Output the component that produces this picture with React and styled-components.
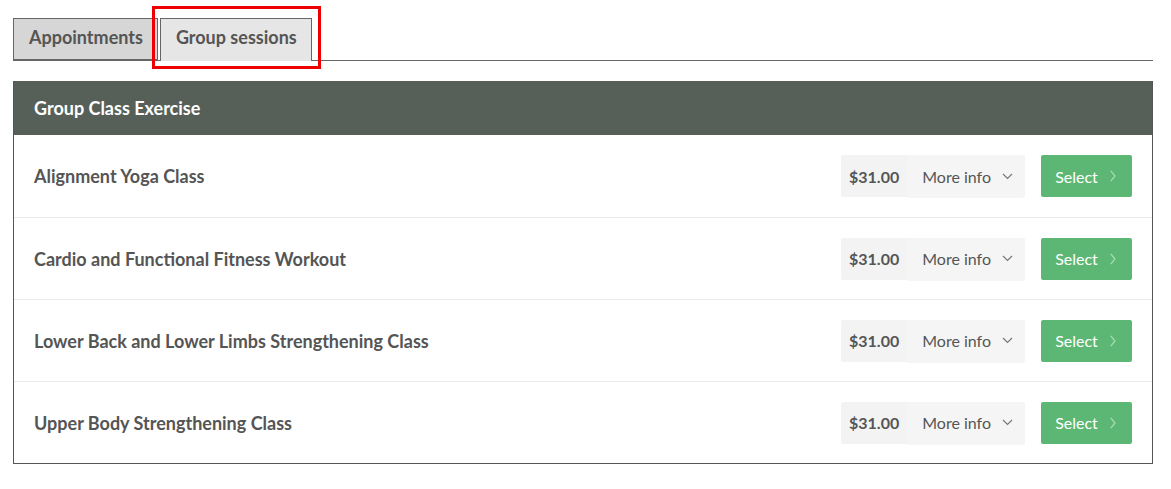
import React from "react";
import styled, { createGlobalStyle } from "styled-components";

const GlobalStyle = createGlobalStyle`
  body {
    margin: 0;
    background: #fff;
    font-family: Lato, "Liberation Sans", sans-serif;
  }
`;

const Page = styled.div`
  padding: 18px 18px 0 13px;
  width: 1140px;
`;

const TabBar = styled.div`
  display: flex;
  align-items: flex-start;
  gap: 2px;
  border-bottom: 1px solid #666;
  height: 42px;
`;

const Tab = styled.div`
  position: relative;
  box-sizing: border-box;
  height: ${({ active }) => (active ? "43px" : "42px")};
  padding: 6px 14px 0 15px;
  font-size: 18px;
  line-height: 24px;
  font-weight: 700;
  color: #555;
  background: ${({ active }) => (active ? "#e6e6e6" : "#d6d6d6")};
  border: 1px solid #666;
  border-bottom: ${({ active }) => (active ? "none" : "1px solid #666")};

  ${({ highlighted }) =>
    highlighted &&
    `
    &::after {
      content: "";
      position: absolute;
      top: -13px;
      left: -9px;
      right: -10px;
      bottom: -8px;
      border: 3px solid #ee0000;
      pointer-events: none;
    }
  `}
`;

const Panel = styled.section`
  margin-top: 20px;
  border: 1px solid #555;
  border-top: none;
`;

const PanelHeader = styled.h2`
  margin: 0;
  height: 54px;
  display: flex;
  align-items: center;
  padding: 0 20px;
  background: #566059;
  color: #fff;
  font-size: 18px;
  font-weight: 700;
`;

const Row = styled.div`
  height: 82px;
  box-sizing: border-box;
  display: flex;
  align-items: center;
  padding: 0 20px;
  border-top: ${({ first }) => (first ? "none" : "1px solid #ebebeb")};
`;

const Title = styled.div`
  flex: 1;
  font-size: 18px;
  font-weight: 700;
  color: #555;
`;

const PriceBox = styled.div`
  display: flex;
  align-items: center;
  height: 42px;
  background: #f3f3f3;
  border-radius: 2px;
`;

const Price = styled.span`
  padding: 0 8px;
  font-size: 16px;
  font-weight: 700;
  color: #555;
`;

const MoreInfo = styled.button`
  display: flex;
  align-items: center;
  gap: 11px;
  height: 43px;
  align-self: flex-start;
  padding: 0 12px 1px 15px;
  border: none;
  border-radius: 2px;
  background: #f5f5f5;
  font-family: inherit;
  font-size: 16px;
  color: #555;
`;

const SelectButton = styled.button`
  margin-left: 16px;
  width: 91px;
  height: 42px;
  display: flex;
  align-items: center;
  justify-content: center;
  gap: 12px;
  padding: 0 2px 0 0;
  border: none;
  border-radius: 2px;
  background: #5db774;
  color: #fff;
  font-family: inherit;
  font-size: 16px;
`;

const ChevronDown = () => (
  <svg width="11" height="7" viewBox="0 0 11 7" fill="none">
    <path d="M1 1 L5.5 5.5 L10 1" stroke="#777" strokeWidth="1.2" />
  </svg>
);

const ChevronRight = () => (
  <svg width="6" height="12" viewBox="0 0 6 12" fill="none">
    <path d="M0.8 0.8 L5 6 L0.8 11.2" stroke="#a9dcb6" strokeWidth="1.2" />
  </svg>
);

const classes = [
  "Alignment Yoga Class",
  "Cardio and Functional Fitness Workout",
  "Lower Back and Lower Limbs Strengthening Class",
  "Upper Body Strengthening Class",
];

export default function App() {
  return (
    <Page>
      <GlobalStyle />
      <TabBar>
        <Tab>Appointments</Tab>
        <Tab active highlighted>
          Group sessions
        </Tab>
      </TabBar>
      <Panel>
        <PanelHeader>Group Class Exercise</PanelHeader>
        {classes.map((name, i) => (
          <Row key={name} first={i === 0}>
            <Title>{name}</Title>
            <PriceBox>
              <Price>$31.00</Price>
              <MoreInfo>
                More info <ChevronDown />
              </MoreInfo>
            </PriceBox>
            <SelectButton>
              Select <ChevronRight />
            </SelectButton>
          </Row>
        ))}
      </Panel>
    </Page>
  );
}
